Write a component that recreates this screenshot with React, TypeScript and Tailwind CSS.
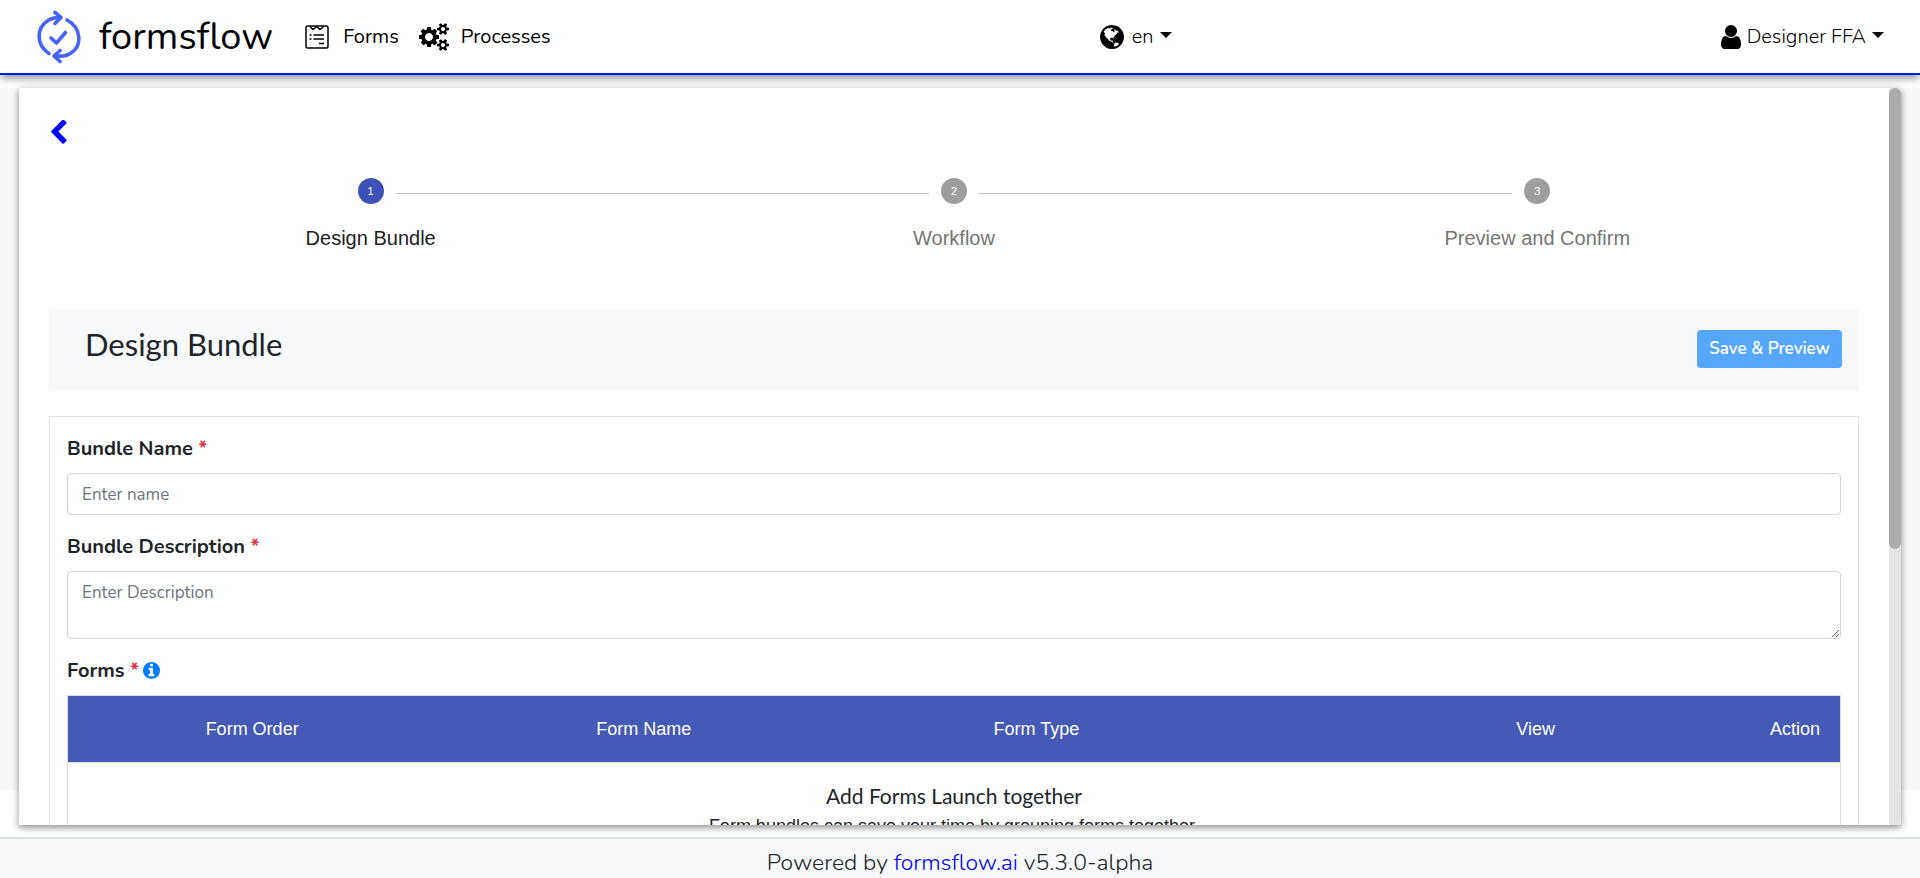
import { useState } from "react";
import type { ReactNode } from "react";

const COGS =
  "M896 896q0-106-75-181t-181-75-181 75-75 181 75 181 181 75 181-75 75-181zm768 512q0-52-38-90t-90-38-90 38-38 90q0 53 37.5 90.5t90.5 37.5 90.5-37.5 37.5-90.5zm0-1024q0-52-38-90t-90-38-90 38-38 90q0 53 37.5 90.5t90.5 37.5 90.5-37.5 37.5-90.5zm-384 421v185q0 10-7 19.5t-16 10.5l-155 24q-11 35-32 76 34 48 90 115 7 11 7 20 0 12-7 19-23 30-82.5 89.5t-78.5 59.5q-11 0-21-7l-115-90q-37 19-77 31-11 108-23 155-7 24-30 24h-186q-11 0-20-7.5t-10-17.5l-23-153q-34-10-75-31l-118 89q-7 7-20 7-11 0-21-8-144-133-144-160 0-9 7-19 10-14 41-53t47-61q-23-44-35-82l-152-24q-10-1-17-9.5t-7-19.5v-185q0-10 7-19.5t16-10.5l155-24q11-35 32-76-34-48-90-115-7-11-7-20 0-12 7-20 22-30 82-89t79-59q11 0 21 7l115 90q34-18 77-32 11-108 23-154 7-24 30-24h186q11 0 20 7.5t10 17.5l23 153q34 10 75 31l118-89q8-7 20-7 11 0 21 8 144 133 144 160 0 8-7 19-12 16-42 54t-45 60q23 48 34 82l152 23q10 2 17 10.5t7 19.5zm640 533v140q0 16-149 31-12 27-30 52 51 113 51 138 0 4-4 7-122 71-124 71-8 0-46-47t-52-68q-20 2-30 2t-30-2q-14 21-52 68t-46 47q-2 0-124-71-4-3-4-7 0-25 51-138-18-25-30-52-149-15-149-31v-140q0-16 149-31 13-29 30-52-51-113-51-138 0-4 4-7 4-2 35-20t59-34 30-16q8 0 46 46.5t52 67.5q20-2 30-2t30 2q51-71 92-112l6-2q4 0 124 70 4 3 4 7 0 25-51 138 17 23 30 52 149 15 149 31zm0-1024v140q0 16-149 31-12 27-30 52 51 113 51 138 0 4-4 7-122 71-124 71-8 0-46-47t-52-68q-20 2-30 2t-30-2q-14 21-52 68t-46 47q-2 0-124-71-4-3-4-7 0-25 51-138-18-25-30-52-149-15-149-31v-140q0-16 149-31 13-29 30-52-51-113-51-138 0-4 4-7 4-2 35-20t59-34 30-16q8 0 46 46.5t52 67.5q20-2 30-2t30 2q51-71 92-112l6-2q4 0 124 70 4 3 4 7 0 25-51 138 17 23 30 52 149 15 149 31z";
const USER =
  "M1536 1399q0 109-62.5 187t-150.5 78h-854q-88 0-150.5-78t-62.5-187q0-85 8.5-160.5t31.5-152 58.5-131 94-89 134.5-34.5q131 128 313 128t313-128q76 0 134.5 34.5t94 89 58.5 131 31.5 152 8.5 160.5zm-256-887q0 159-112.5 271.5t-271.5 112.5-271.5-112.5-112.5-271.5 112.5-271.5 271.5-112.5 271.5 112.5 112.5 271.5z";
const INFO =
  "M1152 1376v-160q0-14-9-23t-23-9h-96v-512q0-14-9-23t-23-9h-320q-14 0-23 9t-9 23v160q0 14 9 23t23 9h96v320h-96q-14 0-23 9t-9 23v160q0 14 9 23t23 9h448q14 0 23-9t9-23zm-128-896v-160q0-14-9-23t-23-9h-192q-14 0-23 9t-9 23v160q0 14 9 23t23 9h192q14 0 23-9t9-23zm640 416q0 209-103 385.5t-279.5 279.5-385.5 103-385.5-103-279.5-279.5-103-385.5 103-385.5 279.5-279.5 385.5-103 385.5 103 279.5 279.5 103 385.5z";
const CHEVRON =
  "M1427 301l-531 531 531 531q19 19 19 45t-19 45l-166 166q-19 19-45 19t-45-19l-742-742q-19-19-19-45t19-45l742-742q19-19 45-19t45 19l166 166q19 19 19 45t-19 45z";
const GLOBE =
  "M896 128q209 0 385.5 103t279.5 279.5 103 385.5-103 385.5-279.5 279.5-385.5 103-385.5-103-279.5-279.5-103-385.5 103-385.5 279.5-279.5 385.5-103zm274 521q-2 1-9.5 9.5t-13.5 9.5q2 0 4.5-5t5-11 3.5-7q6-7 22-15 14-6 52-12 34-8 51 11-2-2 9.5-13t14.5-12q3-2 15-4.5t15-7.5l2-22q-12 1-17.5-7t-6.5-21q0 2-6 8 0-7-4.5-8t-11.5 1-9 1q-10-3-15-7.5t-8-16.5-4-15q-2-5-9.5-10.5t-9.5-10.5q-1-2-2.5-5.5t-3-6.5-4-5.5-5.5-2.5-7 5-7.5 10-4.5 5q-3-2-6-1.5t-4.5 1-4.5 3-5 3.5q-3 2-8.5 3t-8.5 2q15-5-1-11-10-4-16-3 9-4 7.5-12t-8.5-14h5q-1-4-8.5-8.5t-17.5-8.5-13-6q-8-5-34-9.5t-33-.5q-5 6-4.5 10.5t4 14 3.5 12.5q1 6-5.5 13t-6.5 12q0 7 14 15.5t10 21.5q-3 8-16 16t-16 12q-5 8-1.5 18.5t10.5 16.5q2 2 1.5 4t-3.5 4.5-5.5 4-6.5 3.5l-3 2q-11 5-20.5-6t-13.5-26q-7-25-16-30-23-8-29 1-5-13-41-26-25-9-58-4 6-1 0-15-7-15-19-12 3-6 4-17.5t1-13.5q3-13 12-23 1-1 7-8.5t9.5-13.5.5-6q35 4 50-11 5-5 11.500-17t10.500-17q9-6 14-5.500t14.500 5.500 14.500 5q14 1 15.500-11t-7.500-20q12 1 3-17-4-7-8-9-12-4-27 5-8 4 2 8-1-1-9.500 10.500t-16.500 17.500-16-5q-1-1-5.500-13.500t-9.500-13.500q-8 0-16 15 3-8-11-15t-24-8q19-12-8-27-7-4-20.500-5t-19.500 4q-5 7-5.500 11.500t5 8 10.500 5.500 11.500 4 8.500 3q14 10 8 14-2 1-8.500 3.500t-11.500 4.500-6 4q-3 4 0 14t-2 14q-5-5-9-17.500t-7-16.500q7 9-25 6l-10-1q-4 0-16 2t-20.500 1-13.500-8q-4-8 0-20 1-4 4-2-4-3-11-9.500t-10-8.500q-46 15-94 41 6 1 12-1 5-2 13-6.500t10-5.500q34-14 42-7l5-5q14 16 20 25-7-4-30-1-20 6-22 12 7 12 5 18-4-3-11.500-10t-14.500-11-15-5q-16 0-22 1-146 80-235 222 7 7 12 8 4 1 5 9t2.500 11 11.500-3q9 8 3 19 1-1 44 27 19 17 21 21 3 11-10 18-1-2-9-9t-9-4q-3 5 .5 18.500t10.500 12.500q-7 0-9.500 16t-2.500 35.500-1 23.500l2 1q-3 12 5.500 34.500t21.500 19.500q-13 3 20 43 6 8 8 9 3 2 12 7.500t15 10 10 10.500q4 5 10 22.500t14 23.500q-2 6 9.500 20t10.500 23q-1 0-2.500 1t-2.500 1q3 7 15.500 14t15.500 13q1 3 2 10t3 11 8 2q2-20-24-62-15-25-17-29-3-5-5.500-15.500t-4.500-14.500q2 0 6 1.500t8.500 3.500 7.500 4 2 3q-3 7 2 17.500t12 18.500 17 19 12 13q6 6 14 19.500t0 13.500q9 0 20 10t17 20q5 8 8 26t5 24q2 7 8.500 13.500t12.500 9.500l16 8 13 7q5 2 18.500 10.500t21.500 11.500q10 4 16 4t14.500-2.500 13.500-3.500q15-2 29 15t21 21q36 19 55 11-2 1 .5 7.500t8 15.500 9 14.500 5.500 8.500q5 6 18 15t18 15q6-4 7-9-3 8 7 20t18 10q14-3 14-32-31 15-49-18 0-1-2.500-5.500t-4-8.500-2.500-8.500 0-7.500 5-3q9 0 10-3.500t-2-12.500-4-13q-1-8-11-20t-12-15q-5 9-16 8t-16-9q0 1-1.500 5.500t-1.500 6.500q-13 0-15-1 1-3 2.500-17.500t3.500-22.500q1-4 5.500-12t7.500-14.500 4-12.500-4.500-9.500-17.500-2.500q-19 1-26 20-1 3-3 10.500t-5 11.500-9 7q-7 3-24 2t-24-5q-13-8-22.500-29t-9.500-37q0-10 2.500-26.500t3-25-5.500-24.500q3-2 9-9.500t10-10.500q2-1 4.500-1.500t4.500 0 4-1.500 3-6q-1-1-4-3-3-3-4-3 7 3 28.500-1.500t27.500 1.500q15 11 22-2 0-1-2.500-9.500t-.5-13.500q5 27 29 9 3 3 15.500 5t17.500 5q3 2 7 5.500t5.500 4.500 5-.5 8.500-6.500q10 14 12 24 11 40 19 44 7 3 11 2t4.500-9.500 0-14-1.500-12.500l-1-8v-18l-1-8q-15-3-18.500-12t1.500-18.500 15-18.500q1-1 8-3.500t15.500-6.500 12.500-8q21-19 15-35 7 0 11-9-1 0-5-3t-7.500-5-4.500-2q9-5 2-16 5-3 7.500-11t7.500-10q9 12 21 2 8-8 1-16 5-7 20.500-10.500t18.500-9.500q7 2 8-2t1-12 3-12q4-5 15-9t13-5l17-11q3-4 0-4 18 2 31-11 10-11-6-20 3-6-3-9.500t-15-5.500q3-1 11.500-.5t10.500-1.500q15-10-7-16-17-5-43 12zm-163 877q206-36 351-189-3-3-12.500-4.500t-12.500-3.500q-18-7-24-8 1-7-2.500-13t-8-9-12.500-8-11-7q-2-2-7-6t-7-5.500-7.500-4.500-8.500-2-10 1l-3 1q-3 1-5.500 2.500t-5.500 3-4 3 0 2.500q-21-17-36-22-5-1-11-5.500t-10.500-7-10-1.500-11.500 7q-5 5-6 15t-2 13q-7-5 0-17.500t2-18.500q-3-6-10.500-4.500t-12 4.500-11.500 8.500-9 6.500-8.500 5.500-8.500 7.500q-3 4-6 12t-5 11q-2-4-11.500-6.500t-9.500-5.500q2 10 4 35t5 38q7 31-12 48-27 25-29 40-4 22 12 26 0 7-8 20.500t-7 21.500q0 6 2 16z";

function Logo() {
  return (
    <svg viewBox="0 0 44 54" className="h-[54px] w-11" fill="none" stroke="#4a63f7" strokeWidth="3.600" strokeLinecap="round" strokeLinejoin="round" aria-hidden="true">
      <path d="M12 43.500C-1 35 -1 18 11 10.500C14 8.500 18 7.500 22 7.500" />
      <path d="M30 10C45 18 45 36 34 43C30 46 25 46.500 20 46" />
      <path d="M18 2.500l6 5l-6 6" />
      <path d="M23 40.500L17 46l6 5.500" />
      <path d="M14 28l5.500 5L28.500 22.500" />
    </svg>
  );
}

function FormIcon() {
  return (
    <svg viewBox="0 0 24 24" className="h-6 w-6" fill="none" stroke="#000" strokeWidth="1.500" aria-hidden="true">
      <rect x="1" y="1" width="22" height="22" rx="1.500" />
      <path d="M5 1.500l3 3l3.500-3l3.500 3l4-3" />
      <path d="M4.500 10h2M8.500 10h10.500M4.500 14h2M8.500 14h10.500M14 18.500h5" />
    </svg>
  );
}

const Caret = () => (
  <svg viewBox="0 0 12 6" className="mb-1 h-1.5 w-3" fill="#000" aria-hidden="true">
    <path d="M0 0h12L6 6z" />
  </svg>
);

const STEPS = ["Design Bundle", "Workflow", "Preview and Confirm"];

function Stepper({ active }: { active: number }) {
  return (
    <ol className="flex px-[30px] font-['Liberation_Sans',sans-serif]">
      {STEPS.map((step, i) => (
        <li key={step} className="flex flex-1 flex-col items-center">
          <div className="flex w-full items-center gap-3">
            <span className={i > 0 ? "mt-1 h-px flex-1 bg-[#bdbdbd]" : "flex-1"} />
            <span
              className={
                i === active
                  ? "flex size-[26px] items-center justify-center rounded-full bg-[#3f51b5] text-[11px] text-white"
                  : "flex size-[26px] items-center justify-center rounded-full bg-[#9e9e9e] text-[11px] text-white"
              }
            >
              {i + 1}
            </span>
            <span className={i < STEPS.length - 1 ? "mt-1 h-px flex-1 bg-[#bdbdbd]" : "flex-1"} />
          </div>
          <span className={i === active ? "mt-5 text-xl text-[#212121]" : "mt-5 text-xl text-[#757575]"}>{step}</span>
        </li>
      ))}
    </ol>
  );
}

function Label({ htmlFor, children }: { htmlFor?: string; children: ReactNode }) {
  return (
    <label htmlFor={htmlFor} className="mb-2.5 block text-xl font-bold">
      {children} <span className="text-[#dc3545]">*</span>
    </label>
  );
}

export default function App() {
  const [name, setName] = useState("");
  const [description, setDescription] = useState("");
  return (
    <div className="flex h-screen flex-col overflow-hidden bg-white font-['Nunito','Open_Sans',sans-serif] text-[#212529]">
      <header className="flex h-[75px] shrink-0 items-center border-b-2 border-[#0019ff] bg-white pr-9 pl-[37px] text-xl text-black shadow-[0_4px_8px_-1px_rgba(0,0,0,0.45)]">
        <a href="#home" className="flex items-center gap-[18px]">
          <Logo />
          <span className="text-[38px]">formsflow</span>
        </a>
        <nav className="ml-8 flex items-center gap-5">
          <a href="#forms" className="flex items-center gap-[14px]">
            <FormIcon />
            Forms
          </a>
          <a href="#processes" className="flex items-center gap-3">
            <svg viewBox="0 0 1920 1792" className="h-7 w-[30px]" aria-hidden="true">
              <path d={COGS} />
            </svg>
            Processes
          </a>
        </nav>
        <div className="flex flex-1 justify-center">
          <button type="button" className="flex items-center gap-1.5 font-light">
            <svg viewBox="128 128 1536 1536" className="mr-0.5 size-6" aria-hidden="true">
              <path d={GLOBE} />
            </svg>
            en <Caret />
          </button>
        </div>
        <button type="button" className="flex items-center gap-1.5 font-light">
          <svg viewBox="256 128 1280 1536" className="h-6 w-5" aria-hidden="true">
            <path d={USER} />
          </svg>
          Designer FFA
          <Caret />
        </button>
      </header>

      <div className="mt-[13px] min-h-0 flex-1 bg-[linear-gradient(#f7f7f7,#f7f7f7)] bg-[length:100%_80vh] bg-no-repeat px-[19px] pb-3">
        <div className="flex h-full bg-white shadow-[0_3px_6px_rgba(0,0,0,0.35),0_0_10px_rgba(0,0,0,0.12)]">
          <main className="min-w-0 flex-1 overflow-y-auto px-[30px] pt-[30px] [scrollbar-width:none]">
            <button type="button" aria-label="Back" className="block">
              <svg viewBox="410 60 1060 1600" className="h-7 w-5 py-0.5" fill="#0000ff" aria-hidden="true">
                <path d={CHEVRON} />
              </svg>
            </button>

            <div className="mt-8">
              <Stepper active={0} />
            </div>

            <div className="mt-[57px] flex h-[81px] items-start justify-between bg-[#f8f9fb] pr-[17px] pl-9">
              <h1 className="mt-[15px] font-['Lato',sans-serif] text-[31px] leading-10">Design Bundle</h1>
              <button type="button" className="mt-[21px] h-[38px] rounded bg-[#57a7ff] px-3 text-[17px] font-semibold text-white">
                Save &amp; Preview
              </button>
            </div>

            <form className="mt-[26px] border border-[#dee2e6] px-[17px] pt-[18px]">
              <Label htmlFor="bundle-name">Bundle Name</Label>
              <input
                id="bundle-name"
                type="text"
                placeholder="Enter name"
                value={name}
                onChange={(e) => setName(e.target.value)}
                className="mb-[18px] block h-[42px] w-full rounded border border-[#ced4da] px-3.5 text-[17px] placeholder:text-[#6c757d]"
              />
              <Label htmlFor="bundle-description">Bundle Description</Label>
              <textarea
                id="bundle-description"
                placeholder="Enter Description"
                value={description}
                onChange={(e) => setDescription(e.target.value)}
                className="mb-[18px] block h-[68px] w-full rounded border border-[#ced4da] px-3.5 py-2 text-[17px] placeholder:text-[#6c757d]"
              />
              <div className="flex items-start gap-1">
                <Label>Forms</Label>
                <svg viewBox="128 128 1536 1536" className="mt-[5px] size-[17px]" fill="#007bff" role="img" aria-label="Forms information">
                  <path d={INFO} />
                </svg>
              </div>
              <table className="w-full table-fixed border border-[#dcdcdc] font-['Liberation_Sans',sans-serif] text-lg">
                <thead>
                  <tr className="h-[67px] border-b border-[#dcdcdc] bg-[#4559b5] text-white">
                    <th className="w-[20.8%] font-normal">Form Order</th>
                    <th className="w-[23.4%] font-normal">Form Name</th>
                    <th className="w-[20.9%] font-normal">Form Type</th>
                    <th className="w-[19.7%] pr-4 text-right font-normal">View</th>
                    <th className="pr-5 text-right font-normal">Action</th>
                  </tr>
                </thead>
                <tbody>
                  <tr>
                    <td colSpan={5} className="pt-[19px] pb-20 text-center">
                      <h2 className="font-['Lato',sans-serif] text-[21px] leading-7">Add Forms Launch together</h2>
                      <p className="mt-1 leading-6 text-[#212529]">Form bundles can save your time by grouping forms together.</p>
                    </td>
                  </tr>
                </tbody>
              </table>
              <div className="h-64" />
            </form>
          </main>
          <div aria-hidden="true" className="w-3 shrink-0 bg-[#e4e4e4]">
            <div className="h-[62.5%] rounded-full bg-[#acacac]" />
          </div>
        </div>
      </div>

      <footer className="flex h-[41px] shrink-0 items-end justify-center border-t-2 border-[#dee2e6] bg-[#f8f9fa] text-[23px] leading-[30px] font-light">
        <p>
          Powered by{" "}
          <a href="#formsflow" className="text-[#0000ff]">
            formsflow.ai
          </a>{" "}
          v5.3.0-alpha
        </p>
      </footer>
    </div>
  );
}
